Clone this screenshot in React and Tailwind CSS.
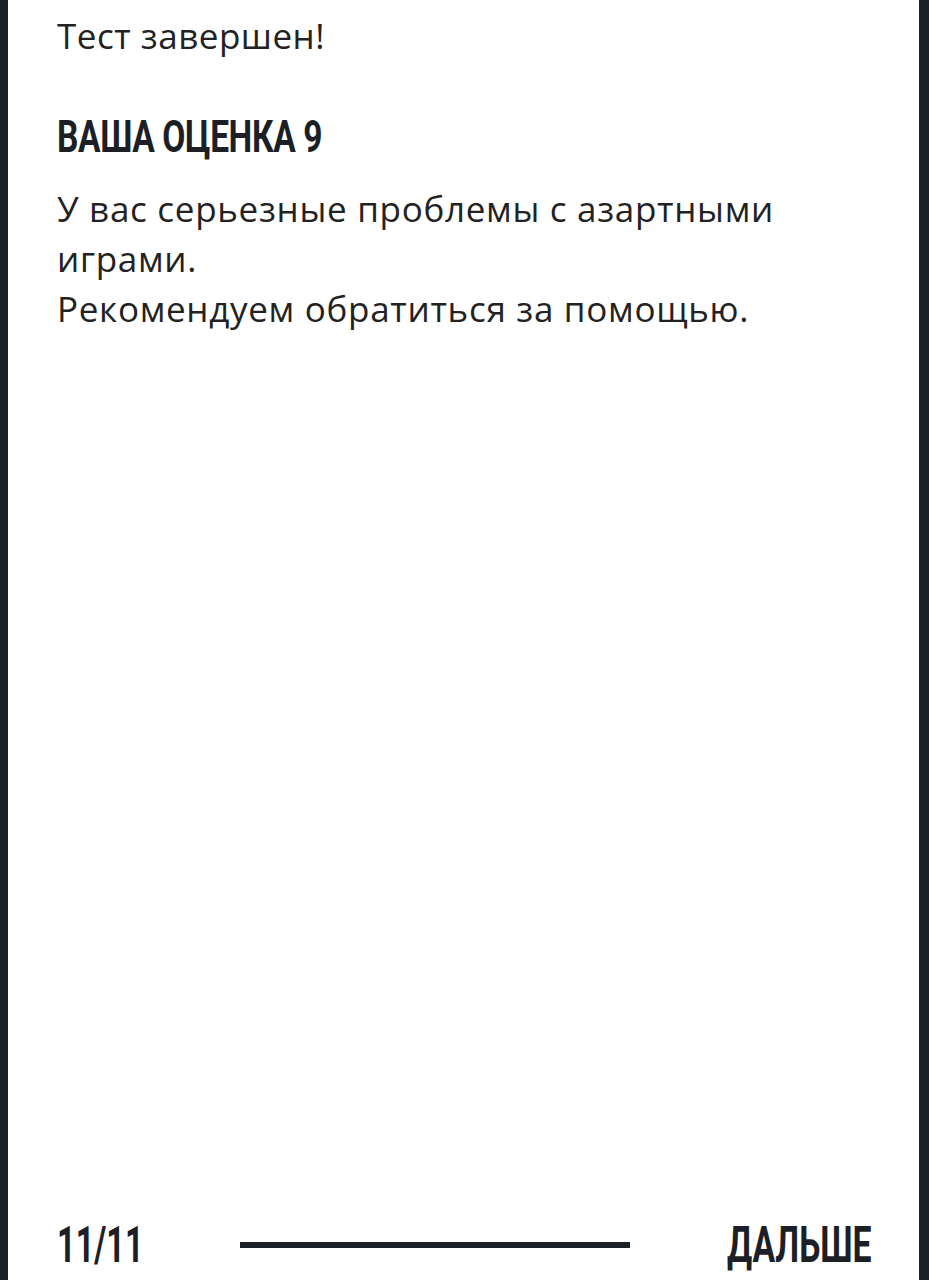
const condensed = "font-['Roboto',sans-serif] font-bold inline-block origin-left whitespace-nowrap";

export default function App() {
  return (
    <div className="flex h-[1280px] w-full bg-[#1c2029]">
      <div className="ml-[8px] mr-[10px] flex flex-1 flex-col justify-between bg-white pl-[49px] pr-[49px] pt-[11px] pb-[10px] text-[#1c1f26]">
        <div>
          <p className="font-['Open_Sans',sans-serif] text-[35px] leading-[50px] tracking-[0.5px] text-[#222]">Тест завершен!</p>
          <h1 className="mt-[51px] h-[50px] leading-[50px]">
            <span className={`${condensed} scale-x-[0.745] text-[45px] tracking-[-0.5px]`}>ВАША ОЦЕНКА 9</span>
          </h1>
          <p className="mt-[22px] font-['Open_Sans',sans-serif] text-[35px] leading-[50px] tracking-[0.7px] text-[#222]">
            У вас серьезные проблемы с азартными
            <br />
            играми.
            <br />
            Рекомендуем обратиться за помощью.
          </p>
        </div>
        <div className="flex items-center">
          <div className="h-[50px] w-[86px] leading-[50px]">
            <span className={`${condensed} scale-x-[0.65] text-[50px]`}>11/11</span>
          </div>
          <div className="mx-[97px] h-[6px] flex-1 bg-[#1c2029]" />
          <div className="h-[50px] w-[143px] leading-[50px]">
            <span className={`${condensed} scale-x-[0.675] text-[50px]`}>ДАЛЬШЕ</span>
          </div>
        </div>
      </div>
    </div>
  );
}
